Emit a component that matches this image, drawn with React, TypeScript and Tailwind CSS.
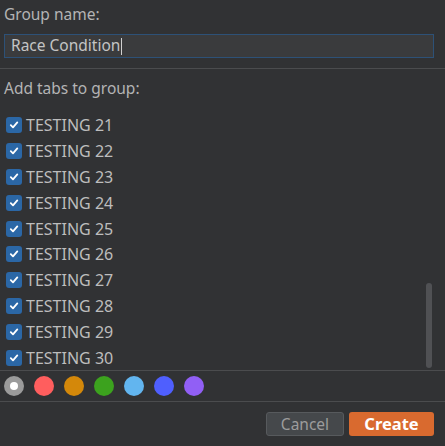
import React from "react";

const tabs = [21, 22, 23, 24, 25, 26, 27, 28, 29, 30];
const colors = ["#ff5e5e", "#d4880a", "#3ca21e", "#62b5ef", "#4f5ffe", "#915ff5"];

const Check = () => (
  <span className="flex h-4 w-4 shrink-0 items-center justify-center rounded-[3px] bg-[#2b67a6]">
    <svg width="10" height="10" viewBox="0 0 10 10" fill="none">
      <path d="M1.8 5.2 L4 7.4 L8.3 2.4" stroke="white" strokeWidth="1.8" strokeLinecap="round" strokeLinejoin="round" />
    </svg>
  </span>
);

export default function App() {
  return (
    <div className="flex h-[446px] w-[445px] flex-col bg-[#313234] text-[15.5px] text-[#b4b4b4] [font-family:'Noto_Sans',sans-serif]">
      <div className="flex h-[34px] shrink-0 items-center px-1 pb-[4px]">Group name:</div>
      <div className="mx-1 flex h-[24px] w-[430px] shrink-0 items-center border border-[#2d5177] bg-[#3a3b3d] px-[6px] text-[#c4c4c4]">
        Race Condition
        <span className="ml-[1px] h-[17px] w-px bg-[#d0d0d0]" />
      </div>
      <div className="mt-[10px] h-px shrink-0 bg-[#4b4c4e]" />
      <div className="flex h-[38px] shrink-0 items-center px-1 pt-[2px]">Add tabs to group:</div>
      <div className="relative flex h-[263px] shrink-0 flex-col overflow-hidden pt-[5px]">
        {tabs.map((n) => (
          <div key={n} className="flex h-[25.9px] shrink-0 items-center gap-1 pl-[6px] text-[16px] text-[#bdbdbd]">
            <Check />
            <span>TESTING {n}</span>
          </div>
        ))}
        <div className="absolute right-[13px] top-[176px] h-[85px] w-[6px] rounded-full bg-[#505154]" />
      </div>
      <div className="h-px shrink-0 bg-[#4b4c4e]" />
      <div className="flex h-[30px] shrink-0 items-center gap-[10px] px-1">
        <span className="flex h-5 w-5 items-center justify-center rounded-full bg-[#9b9b9b]">
          <span className="h-2 w-2 rounded-full bg-white" />
        </span>
        {colors.map((c) => (
          <span key={c} className="h-5 w-5 rounded-full" style={{ backgroundColor: c }} />
        ))}
      </div>
      <div className="h-px shrink-0 bg-[#4b4c4e]" />
      <div className="flex flex-1 items-start justify-end gap-[5px] pr-[11px] pt-[10px]">
        <button className="h-6 w-[78px] rounded-[3px] border border-[#575a5d] bg-[#45484b] text-[#9c9c9c]">Cancel</button>
        <button className="h-6 w-[85px] rounded-[3px] bg-[#d96a2f] text-[16.5px] font-bold text-white">Create</button>
      </div>
    </div>
  );
}
